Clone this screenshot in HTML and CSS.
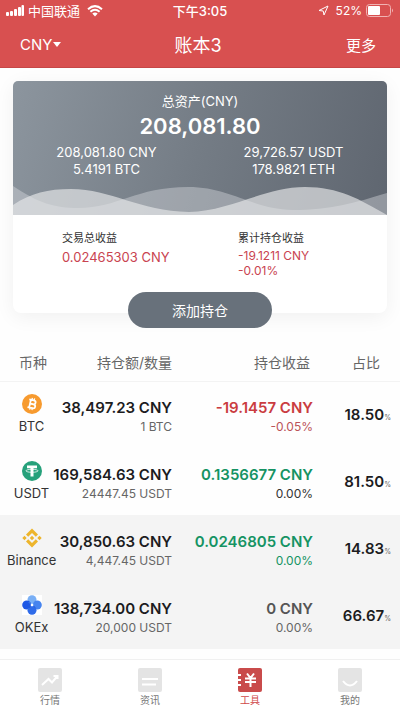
FILE: index.html
```html
<!DOCTYPE html>
<html lang="zh-CN">
<head>
<meta charset="utf-8">
<meta name="viewport" content="width=device-width, initial-scale=1">
<title>账本3</title>
<link rel="stylesheet" href="styles.css">
</head>
<body>
<header class="top">
  <div class="status">
    <div class="status-side">
      <svg class="signal" viewBox="0 0 18 11" aria-hidden="true"><rect x="0" y="7" width="3" height="4" rx="1"/><rect x="4" y="6" width="3" height="5" rx="1"/><rect x="8" y="4" width="3" height="7" rx="1"/><rect x="12" y="2" width="3" height="9" rx="1"/><rect x="15.5" y="0" width="2.5" height="11" rx="1"/></svg>
      <span class="carrier">中国联通</span>
      <svg class="wifi" viewBox="0 0 16 12" aria-hidden="true"><path d="M1 4.2Q8-2 15 4.2" /><path d="M3.4 6.8Q8 2.8 12.6 6.8"/><path class="dot" d="M5.3 8.6Q8 6.4 10.7 8.6L8 11.4Z"/></svg>
    </div>
    <span class="clock">下午3:05</span>
    <div class="status-side status-end">
      <svg class="locate" viewBox="0 0 11 11" aria-hidden="true"><path d="M1 5.5L10 1 6 10 5.2 6Z"/></svg>
      <span>52%</span>
      <svg class="battery" viewBox="0 0 28 13" aria-hidden="true"><rect class="shell" x=".5" y=".5" width="24" height="12" rx="3"/><rect x="2" y="2" width="12" height="9" rx="1"/><path class="cap" d="M26 4.5Q28 6.500 26 8.500Z"/></svg>
    </div>
  </div>
  <nav class="bar">
    <button class="currency" type="button">CNY<svg viewBox="0 0 8 5" aria-hidden="true"><path d="M0 0H8L4 5Z"/></svg></button>
    <h1>账本3</h1>
    <button class="more" type="button">更多</button>
  </nav>
</header>

<main>
  <section class="card">
    <div class="summary">
      <svg class="waves" viewBox="0 0 374 134" preserveAspectRatio="none" aria-hidden="true">
        <path class="w1" d="M0 105C25 122 42 127 65 127C105 127 123 106 175 106C218 106 238 128 280 129C318 129 341 122 374 112V134H0Z"/>
        <path class="w2" d="M0 124C18 112 35 108 58 108C98 108 126 130 176 131C218 130 252 106 292 106C326 106 346 118 374 134H0Z"/>
      </svg>
      <p class="label">总资产(CNY)</p>
      <p class="total">208,081.80</p>
      <div class="equivalents">
        <p>208,081.80 CNY<br>5.4191 BTC</p>
        <p>29,726.57 USDT<br>178.9821 ETH</p>
      </div>
    </div>
    <div class="profits">
      <div><h2>交易总收益</h2><p class="first">0.02465303 CNY</p></div>
      <div><h2>累计持仓收益</h2><p class="second">-19.1211 CNY<br>-0.01%</p></div>
    </div>
    <button class="add" type="button">添加持仓</button>
  </section>

  <table class="holdings">
    <colgroup><col class="c-coin"><col class="c-amount"><col class="c-gain"><col></colgroup>
    <thead><tr><th>币种</th><th>持仓额/数量</th><th>持仓收益</th><th>占比</th></tr></thead>
    <tbody>
      <tr>
        <td class="coin"><svg viewBox="0 0 20 20" aria-hidden="true"><circle cx="10" cy="10" r="10" fill="#f79a2e"/><g fill="none" stroke="#fff" stroke-width="1.800" transform="rotate(13 10 10)"><path d="M6.300 6H11Q13.200 6 13.200 8T11 10H8H11.500Q13.700 10 13.700 12T11.500 14H6.300M8 6V14"/><path stroke-width="1.300" d="M9 4V6M11.300 4V6M9 14V16M11.300 14V16"/></g></svg><span>BTC</span></td>
        <td class="num"><b>38,497.23 CNY</b><small>1 BTC</small></td>
        <td class="num down"><b>-19.1457 CNY</b><small>-0.05%</small></td>
        <td class="share"><b>18.50</b><small>%</small></td>
      </tr>
      <tr>
        <td class="coin"><svg viewBox="0 0 20 20" aria-hidden="true"><circle cx="10" cy="10" r="10" fill="#26a17b"/><path fill="#fff" d="M5 4.500H15V7.200H11.500V15.500H8.500V7.200H5Z"/><ellipse cx="10" cy="9.800" rx="6" ry="1.500" fill="none" stroke="#fff" stroke-width=".8"/></svg><span>USDT</span></td>
        <td class="num"><b>169,584.63 CNY</b><small>24447.45 USDT</small></td>
        <td class="num up dark"><b>0.1356677 CNY</b><small>0.00%</small></td>
        <td class="share"><b>81.50</b><small>%</small></td>
      </tr>
      <tr class="exchange">
        <td class="coin"><svg viewBox="0 0 20 20" aria-hidden="true"><g fill="#edb52c"><path d="M10 .5L16 6.500 13.800 8.700 10 4.900 6.200 8.700 4 6.500ZM10 19.500L16 13.500 13.800 11.300 10 15.100 6.200 11.300 4 13.500ZM10 7.800L12.200 10 10 12.200 7.800 10ZM2.500 7.800L4.700 10 2.500 12.200.3 10ZM17.500 7.800L19.700 10 17.500 12.200 15.300 10Z"/></g></svg><span>Binance</span></td>
        <td class="num"><b>30,850.63 CNY</b><small>4,447.45 USDT</small></td>
        <td class="num up"><b>0.0246805 CNY</b><small>0.00%</small></td>
        <td class="share"><b>14.83</b><small>%</small></td>
      </tr>
      <tr class="exchange">
        <td class="coin"><svg viewBox="0 0 20 20" aria-hidden="true"><rect width="20" height="20" fill="#fff"/><circle cx="10" cy="4.700" r="4.500" fill="#79aff5"/><circle cx="15.300" cy="10" r="4.500" fill="#4684ef"/><circle cx="4.700" cy="10" r="4.500" fill="#1d57e5"/><circle cx="10" cy="15.300" r="4.500" fill="#2f6be9"/><path d="M6.200 7.600A4.500 4.500 0 0 0 9.100 9.100 4.500 4.500 0 0 0 7.600 6.500Z" fill="#3f78e6"/><path d="M9.100 10.900A4.500 4.500 0 0 0 6.200 13 4.500 4.500 0 0 0 9.100 10.900ZM10.900 10.900A4.500 4.500 0 0 1 13.800 13Z" fill="#1743be"/><rect x="8.800" y="8.800" width="2.400" height="2.400" fill="#fff"/></svg><span>OKEx</span></td>
        <td class="num"><b>138,734.00 CNY</b><small>20,000 USDT</small></td>
        <td class="num flat"><b>0 CNY</b><small>0.00%</small></td>
        <td class="share"><b>66.67</b><small>%</small></td>
      </tr>
    </tbody>
  </table>
</main>

<nav class="tabs">
  <a href="#market"><svg viewBox="0 0 24 24" aria-hidden="true"><rect width="24" height="24" rx="2"/><path d="M4 17L10.500 11 14 14.500 19 8.500M15.500 8H19.500V11"/></svg>行情</a>
  <a href="#news"><svg viewBox="0 0 24 24" aria-hidden="true"><rect width="24" height="24" rx="2"/><path d="M4 11H20M4 16.500H18"/></svg>资讯</a>
  <a href="#tools" class="active" aria-current="page"><svg viewBox="0 0 24 24" aria-hidden="true"><rect width="24" height="24" rx="2"/><path d="M0 7H3M0 12H3M0 17H3M9 5.500L12.500 10 16 5.500M7 10.500H18M7 14H18M12.500 10V19"/></svg>工具</a>
  <a href="#mine"><svg viewBox="0 0 24 24" aria-hidden="true"><rect width="24" height="24" rx="2"/><path d="M5 13Q12 22 19 13"/></svg>我的</a>
</nav>
</body>
</html>
```
FILE: styles.css
```css
* { box-sizing: border-box; }

body {
  margin: 0;
  min-height: 100vh;
  display: flex;
  flex-direction: column;
  background: #fefefe;
  color: #1c1c1e;
  font-family: Inter, "Noto Sans CJK SC", sans-serif;
  font-size: 13px;
}

h1, h2, p { margin: 0; font-weight: 400; }

button {
  border: 0;
  padding: 0;
  background: none;
  color: inherit;
  font: inherit;
  cursor: pointer;
}

.top {
  background: #d85050;
  border-bottom: 1px solid #c64747;
  color: #fff;
}

.status {
  display: flex;
  align-items: center;
  height: 21px;
  padding: 0 6px;
  font-size: 12px;
}

.status-side {
  flex: 1;
  display: flex;
  align-items: center;
  gap: 4px;
}

.status-end { justify-content: flex-end; }
.status svg { fill: #fff; }
.carrier, .clock { font-size: 13px; line-height: 18px; }
.clock { font-weight: 500; }
.signal { width: 18px; height: 11px; }
.wifi { width: 16px; height: 12px; margin-left: 3px; }
.wifi path { fill: none; stroke: #fff; stroke-width: 2; }
.wifi .dot { fill: #fff; stroke: none; }
.status .locate { width: 11px; height: 11px; margin-right: 3px; fill: none; stroke: #fff; }
.battery { width: 28px; height: 13px; }
.status .shell { fill: none; stroke: #f0b3b3; }
.status .cap { fill: #f0b3b3; }

.bar {
  display: grid;
  grid-template-columns: 1fr auto 1fr;
  align-items: center;
  height: 46px;
  padding: 0 24px 0 20px;
  font-size: 15px;
}

.bar h1 { font-size: 18px; }

.currency {
  justify-self: start;
  display: flex;
  align-items: center;
  gap: 1px;
}

.currency svg { width: 8px; height: 5px; fill: #fff; }
.more { justify-self: end; }

.card {
  display: flex;
  flex-direction: column;
  margin: 13px 13px 0;
  border-radius: 8px;
  background: #fff;
  box-shadow: 0 4px 20px rgba(0, 0, 0, .06);
}

.summary {
  position: relative;
  height: 134px;
  padding-top: 9px;
  border-radius: 5px 5px 0 0;
  overflow: hidden;
  background: linear-gradient(105deg, #8c959e, #747c85 50%, #5f6670);
  color: #fff;
  text-align: center;
}

.waves { position: absolute; inset: 0; width: 100%; height: 100%; }
.w1 { fill: #d9dce0; fill-opacity: .42; }
.w2 { fill: #e4e6e7; fill-opacity: .68; }

.label, .total, .equivalents { position: relative; }
.label { font-size: 13px; line-height: 22px; }
.total { font-size: 22px; line-height: 28px; font-weight: 600; }

.equivalents {
  display: grid;
  grid-template-columns: 1fr 1fr;
  margin-top: 4px;
  font-size: 13px;
  line-height: 17px;
}

.profits {
  display: grid;
  grid-template-columns: 176fr 149fr;
  padding: 13px 0 0 49px;
  color: #c94350;
}

.profits h2 { color: #333; font-size: 11px; line-height: 20px; }
.first { font-size: 13px; line-height: 18px; }
.second { font-size: 12px; line-height: 15px; }

.add {
  align-self: center;
  width: 144px;
  height: 36px;
  margin: 14px 0 -15px;
  border-radius: 18px;
  background: #68717b;
  color: #fff;
  font-size: 14px;
}

.holdings {
  width: 100%;
  margin-top: 30px;
  table-layout: fixed;
  border-collapse: collapse;
  white-space: nowrap;
}

.c-coin { width: 14%; }
.c-amount { width: 29%; }
.c-gain { width: 36%; }

.holdings th {
  height: 38px;
  padding: 0;
  color: #666;
  font-size: 14px;
  font-weight: 400;
  text-align: right;
}

.holdings th:first-child { padding-left: 10px; text-align: center; }
.holdings th:nth-child(3) { padding-right: 6px; }
.holdings th:last-child { padding-right: 20px; }
.holdings thead { border-bottom: 1px solid #f3f3f3; }
.holdings td { height: 67px; padding: 0; }
.holdings b { font-weight: 600; }
.exchange { background: #f4f4f4; }
.coin svg { display: block; width: 20px; height: 20px; margin: 0 auto 3px; }

.holdings .coin {
  padding-left: 7px;
  color: #333;
  font-size: 13px;
  line-height: 18px;
  text-align: center;
}

.holdings .num { padding-top: 5px; text-align: right; }
.num b { display: flex; justify-content: flex-end; font-size: 15px; line-height: 20px; }
.num small { display: block; color: #666; font-size: 12px; line-height: 18px; }
.holdings .num:nth-child(3) { padding-right: 3px; }
.down b { color: #ca3c40; }
.down small { color: #bb5358; }
.up b, .up small { color: #159363; }
.dark small { color: #333; }
.flat b { color: #555; }
.holdings .share { padding-right: 9px; text-align: right; }
.share b { font-size: 15px; }
.share small { color: #666; font-size: 7px; }

.tabs {
  display: grid;
  grid-template-columns: repeat(4, 1fr);
  height: 53px;
  margin-top: auto;
  border-top: 1px solid #f0f0f0;
  background: #fff;
}

.tabs a {
  display: flex;
  flex-direction: column;
  align-items: center;
  padding-top: 8px;
  color: #777;
  font-size: 10px;
  line-height: 17px;
  text-decoration: none;
}

.tabs svg { width: 24px; height: 24px; fill: #e4e4e4; }
.tabs path { fill: none; stroke: #fff; stroke-width: 2; }
.tabs .active { color: #cf4848; }
.tabs .active svg { fill: #c94b4b; }
```
